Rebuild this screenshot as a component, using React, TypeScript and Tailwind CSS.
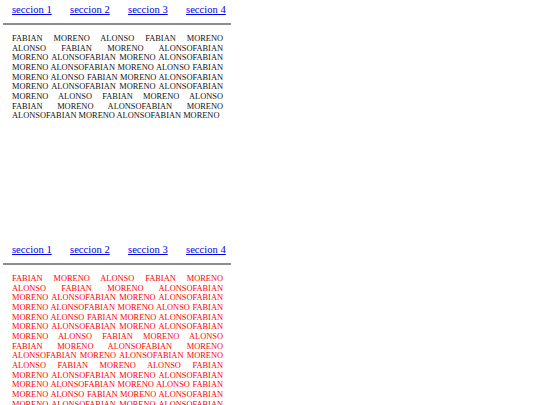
const links = ["seccion 1", "seccion 2", "seccion 3", "seccion 4"];

const baseLines = [
  "FABIAN MORENO ALONSO FABIAN MORENO",
  "ALONSO FABIAN MORENO ALONSOFABIAN",
  "MORENO ALONSOFABIAN MORENO ALONSOFABIAN",
  "MORENO ALONSOFABIAN MORENO ALONSO FABIAN",
  "MORENO ALONSO FABIAN MORENO ALONSOFABIAN",
  "MORENO ALONSOFABIAN MORENO ALONSOFABIAN",
  "MORENO ALONSO FABIAN MORENO ALONSO",
  "FABIAN MORENO ALONSOFABIAN MORENO",
];

const redLines = [
  ...baseLines,
  "ALONSOFABIAN MORENO ALONSOFABIAN MORENO",
  "ALONSO FABIAN MORENO ALONSO FABIAN",
  "MORENO ALONSOFABIAN MORENO ALONSOFABIAN",
  "MORENO ALONSOFABIAN MORENO ALONSO FABIAN",
  "MORENO ALONSO FABIAN MORENO ALONSOFABIAN",
  "MORENO ALONSOFABIAN MORENO ALONSOFABIAN",
];

function Section({ lines, last, red }: { lines: string[]; last?: string; red?: boolean }) {
  return (
    <section className="h-[240px] w-[228px] ml-[3px]">
      <nav className="flex gap-[18.3px] pl-[9px] pt-[4px]">
        {links.map((l) => (
          <a
            key={l}
            href="#"
            className="text-[10.6px] leading-[12px] text-[#0000ee] underline"
          >
            {l}
          </a>
        ))}
      </nav>
      <div className="mt-[7px] h-[2px] bg-[#8c8c8c]" />
      <div
        className={`mt-[9px] w-[211px] ml-[9px] text-[8.4px] leading-[9.65px] ${
          red ? "text-[#ff0000]" : "text-[#111]"
        }`}
      >
        {lines.map((line, i) => (
          <div key={i} className="text-justify [text-align-last:justify] whitespace-nowrap">
            {line}
          </div>
        ))}
        {last ? <div className="whitespace-nowrap">{last}</div> : null}
      </div>
    </section>
  );
}

export default function App() {
  return (
    <div className="h-[405px] w-[540px] overflow-hidden bg-white font-['Liberation_Serif','Times_New_Roman',serif]">
      <Section lines={baseLines} last="ALONSOFABIAN MORENO ALONSOFABIAN MORENO" />
      <Section lines={redLines} red />
    </div>
  );
}
